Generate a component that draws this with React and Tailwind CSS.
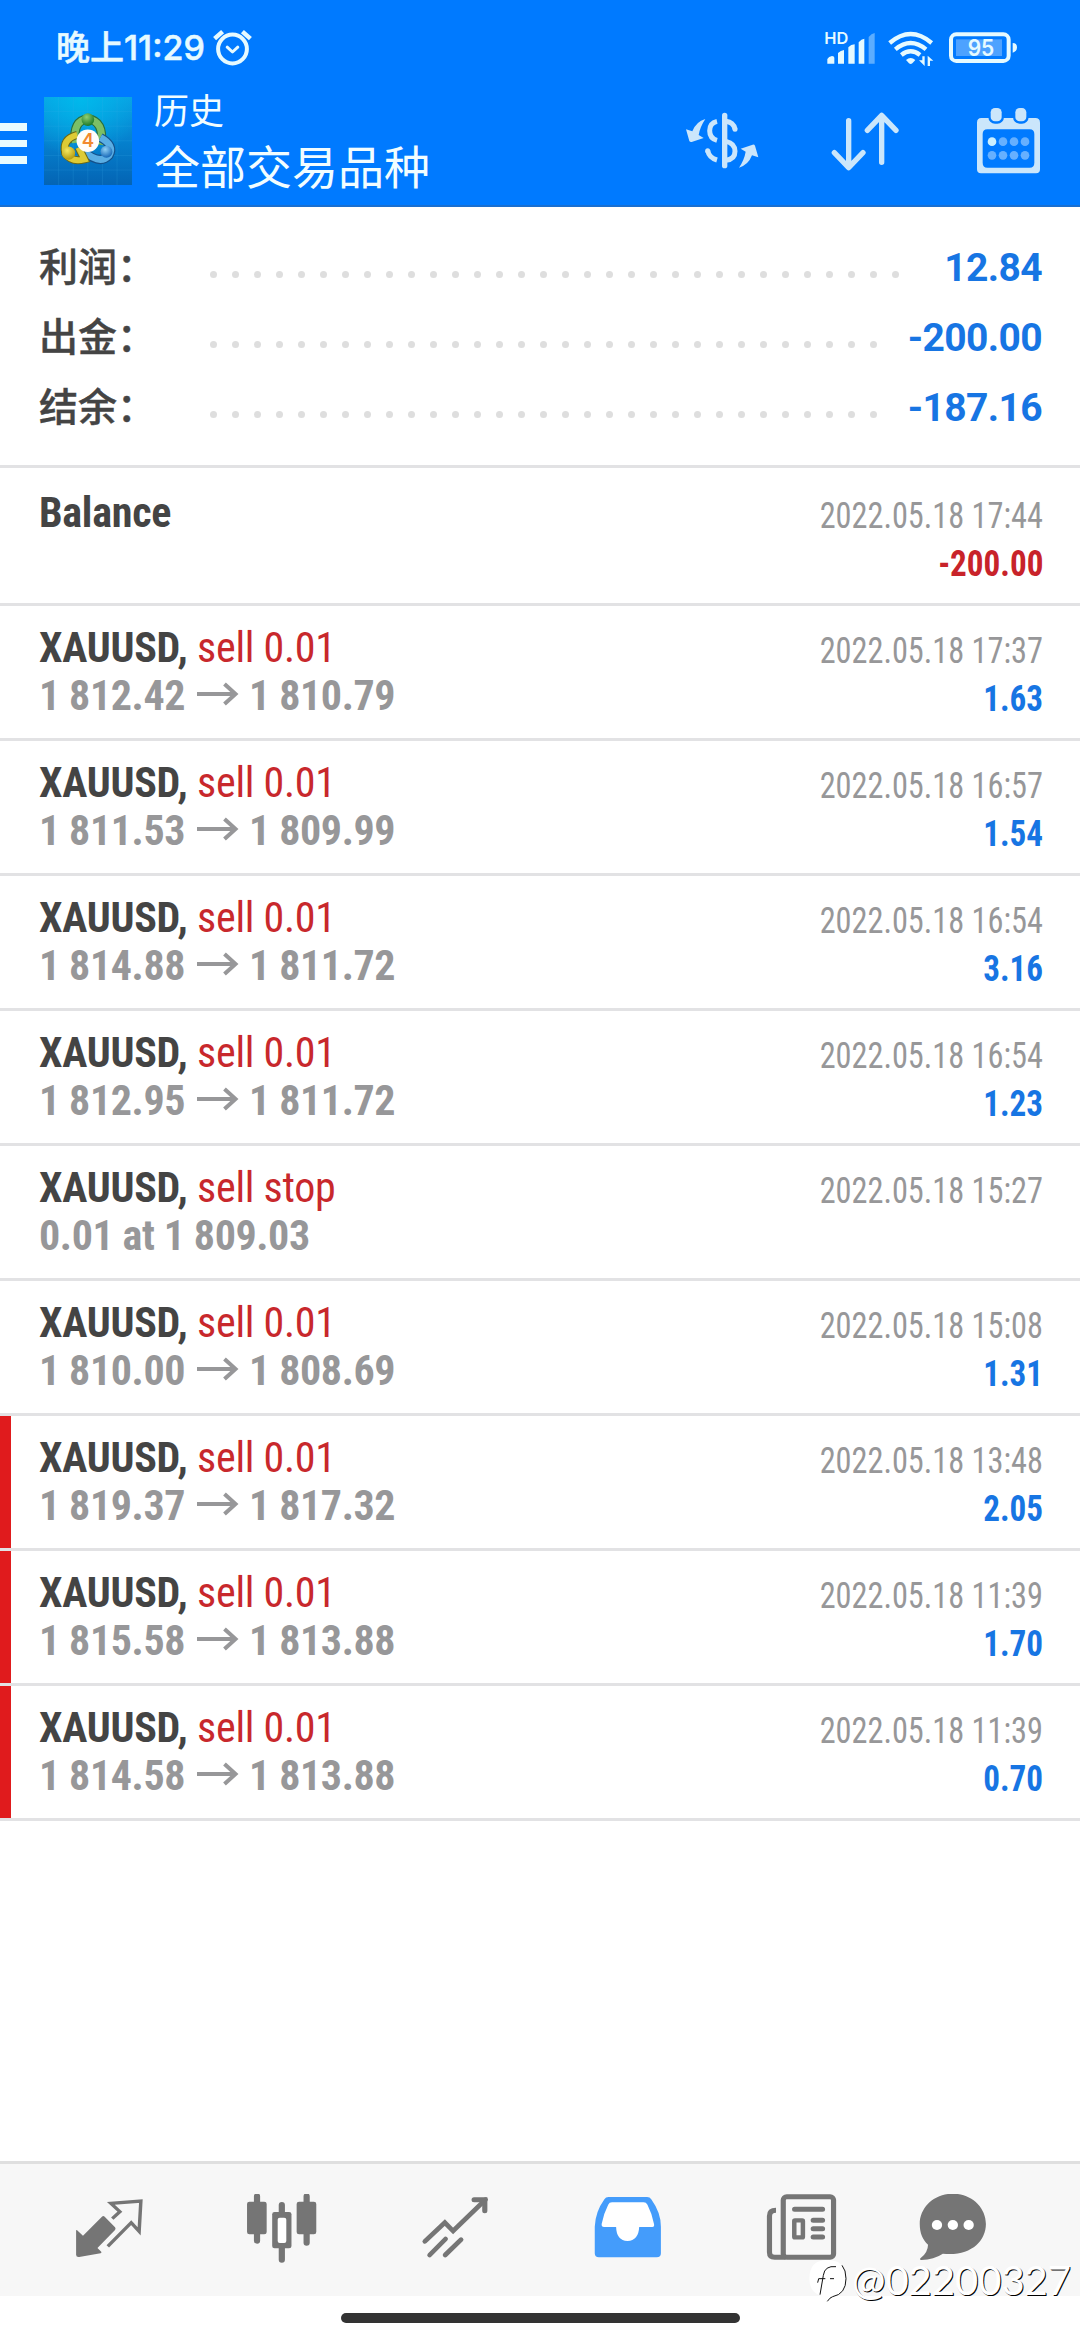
const summary = [
  { label: "利润：", value: "12.84", dots: 32 },
  { label: "出金：", value: "-200.00", dots: 31 },
  { label: "结余：", value: "-187.16", dots: 31 },
];

const deals = [
  { action: "sell 0.01", from: "1 812.42", to: "1 810.79", date: "2022.05.18 17:37", profit: "1.63" },
  { action: "sell 0.01", from: "1 811.53", to: "1 809.99", date: "2022.05.18 16:57", profit: "1.54" },
  { action: "sell 0.01", from: "1 814.88", to: "1 811.72", date: "2022.05.18 16:54", profit: "3.16" },
  { action: "sell 0.01", from: "1 812.95", to: "1 811.72", date: "2022.05.18 16:54", profit: "1.23" },
  { action: "sell stop", note: "0.01 at 1 809.03", date: "2022.05.18 15:27" },
  { action: "sell 0.01", from: "1 810.00", to: "1 808.69", date: "2022.05.18 15:08", profit: "1.31" },
  { action: "sell 0.01", from: "1 819.37", to: "1 817.32", date: "2022.05.18 13:48", profit: "2.05", marked: true },
  { action: "sell 0.01", from: "1 815.58", to: "1 813.88", date: "2022.05.18 11:39", profit: "1.70", marked: true },
  { action: "sell 0.01", from: "1 814.58", to: "1 813.88", date: "2022.05.18 11:39", profit: "0.70", marked: true },
];

function AlarmIcon() {
  return (
    <svg className="ml-[7px] h-[40px] w-[42px]" viewBox="212 27 42 40" fill="none" stroke="#e6faff" strokeLinecap="round" strokeLinejoin="round">
      <circle cx="232.5" cy="48" r="14.4" strokeWidth="4" />
      <path d="M214.6 37.6l8-7M250.4 37.6l-8-7" strokeWidth="4.5" strokeLinecap="butt" />
      <path d="M227.2 46.2l5.3 4.8 5.3-4.8" strokeWidth="3" />
    </svg>
  );
}

function SystemIcons() {
  return (
    <svg className="h-[38px] w-[194px]" viewBox="552 85 582 114" fill="#e6faff">
      <text x="553" y="129" fontSize="49" fontFamily="Inter, sans-serif" fontWeight="600" textLength="72" lengthAdjust="spacingAndGlyphs">HD</text>
      <path d="M562 189v-14q4-8 14-9q7 0 7 5v18zM594 189v-32q8-8 18-9v41zM625 189v-49q8-9 19-9v58zM656 189v-64q8-10 17-11v75z" />
      <path d="M686 189v-80q8-10 18-12v92z" opacity="0.4" />
      <g fill="none" stroke="#e6faff" strokeWidth="13">
        <path d="M749 127Q812 73 875 127" />
        <path d="M766 146Q812 108 858 146" />
        <path d="M784 163Q812 141 840 163" />
      </g>
      <path d="M798 178q14-12 28 0l-9 10q-5 4-10 0z" />
      <path d="M847 167h7v29l-17-17h10zM863 196v-31l17 15h-10v16z" />
      <rect x="933" y="101" width="173" height="80" rx="16" fill="none" stroke="#e6faff" strokeWidth="12" />
      <rect x="948" y="116" width="138" height="50" fill="#fff" opacity="0.3" />
      <path d="M1118 127q13 0 13 13t-13 16z" />
      <text x="983" y="167" fontSize="67" fontFamily="Inter, sans-serif" fontWeight="600" textLength="80" lengthAdjust="spacingAndGlyphs">95</text>
    </svg>
  );
}

function AppLogo() {
  return (
    <svg className="ml-[17px] h-[88px] w-[88px]" viewBox="132 38 265 265">
      <defs>
        <linearGradient id="tile" x1="0" y1="0" x2="0" y2="1">
          <stop offset="0" stopColor="#0aa0e2" />
          <stop offset="0.5" stopColor="#0581ce" />
          <stop offset="1" stopColor="#0464b4" />
        </linearGradient>
        <radialGradient id="glow" cx="0.42" cy="0" r="0.7">
          <stop offset="0" stopColor="#00b9ec" />
          <stop offset="1" stopColor="#00b9ec" stopOpacity="0" />
        </radialGradient>
        <radialGradient id="green" cx="0.4" cy="0.3" r="0.7">
          <stop offset="0" stopColor="#8fcf72" />
          <stop offset="1" stopColor="#1c7a2a" />
        </radialGradient>
        <radialGradient id="gold" cx="0.4" cy="0.3" r="0.7">
          <stop offset="0" stopColor="#f5e860" />
          <stop offset="1" stopColor="#b49b10" />
        </radialGradient>
        <radialGradient id="azure" cx="0.4" cy="0.3" r="0.7">
          <stop offset="0" stopColor="#8fd0f5" />
          <stop offset="1" stopColor="#1668b8" />
        </radialGradient>
      </defs>
      <rect x="132" y="38" width="265" height="265" fill="url(#tile)" />
      <rect x="132" y="38" width="265" height="265" fill="url(#glow)" />
      <path d="M176 38v265M220 38v265M264 38v265M308 38v265M352 38v265M132 82h265M132 126h265M132 170h265M132 214h265M132 258h265" stroke="#3cb0ea" strokeWidth="1.5" opacity="0.35" />
      <path d="M226 176Q218 108 264 104Q314 110 304 182" fill="none" stroke="#2a6e3c" strokeWidth="28" />
      <path d="M226 176Q218 108 264 104Q314 110 304 182" fill="none" stroke="#7cbf66" strokeWidth="21" />
      <path d="M302 160Q346 184 328 214Q300 244 250 200" fill="none" stroke="#14508a" strokeWidth="27" />
      <path d="M302 160Q346 184 328 214Q300 244 250 200" fill="none" stroke="#5aaee4" strokeWidth="20" />
      <path d="M232 152Q186 164 196 208Q214 236 254 226L236 190" fill="none" stroke="#6e6a14" strokeWidth="24" />
      <path d="M232 152Q186 164 196 208Q214 236 254 226L236 190" fill="none" stroke="#ddcb35" strokeWidth="18" />
      <circle cx="264" cy="106" r="19" fill="url(#green)" />
      <circle cx="206" cy="207" r="20" fill="url(#gold)" />
      <circle cx="320" cy="203" r="18" fill="url(#azure)" />
      <circle cx="264" cy="170" r="34" fill="#fffdfa" />
      <text x="264" y="190" textAnchor="middle" fontSize="56" fontFamily="Inter, sans-serif" fontWeight="600" fill="#f28a2e">4</text>
    </svg>
  );
}

function CurrencyIcon() {
  return (
    <svg className="h-[62px] w-[74px]" viewBox="135 330 222 186" fill="none" stroke="#cbe6fb" strokeWidth="15">
      <path d="M254 346v151" strokeWidth="16" strokeLinecap="round" />
      <path d="M231 364q-22 5-22 28t22 29" />
      <path d="M203 451q4 22 28 29" strokeLinecap="butt" />
      <path d="M203 452v1" strokeLinecap="round" />
      <path d="M258 364q22 3 27 23" />
      <path d="M285 387v1" strokeLinecap="round" />
      <path d="M258 424q27 6 27 30t-27 27" />
      <path d="M196 357q-28 8-39 37l-19-6 10 35q2 4 7 3l36-12-15-9q4-24 20-48z" fill="#cbe6fb" stroke="none" />
      <path d="M297 503q28-8 39-37l19 6-10-35q-2-4-7-3l-36 12 15 9q-4 24-20 48z" fill="#cbe6fb" stroke="none" />
    </svg>
  );
}

function SortIcon() {
  return (
    <svg className="ml-[71px] h-[62px] w-[70px]" viewBox="570 330 210 186" fill="none" stroke="#cbe6fb" strokeWidth="16" strokeLinecap="round" strokeLinejoin="round">
      <path d="M626 362v140M583 458l43 45 43-45" />
      <path d="M725 487V350M682 391l43-45 43 45" />
    </svg>
  );
}

function CalendarIcon() {
  return (
    <svg className="ml-[76px] h-[70px] w-[64px]" viewBox="1008 318 192 210">
      <path fillRule="evenodd" fill="#cbe6fb" d="M1024 354H1186Q1200 354 1200 368V508Q1200 520 1188 520H1023Q1011 520 1011 508V368Q1011 354 1024 354ZM1042 388Q1028 388 1028 402V488Q1028 503 1042 503H1169Q1183 503 1183 488V402Q1183 388 1169 388Z" />
      <rect x="1052" y="324" width="33" height="40" rx="13" fill="#cbe6fb" stroke="#007aff" strokeWidth="14" paintOrder="stroke" />
      <rect x="1126" y="324" width="33" height="40" rx="13" fill="#cbe6fb" stroke="#007aff" strokeWidth="14" paintOrder="stroke" />
      <g fill="#66b0ff">
        <circle cx="1056" cy="425" r="13" fill="#cbefff" />
        <circle cx="1089" cy="425" r="13" />
        <circle cx="1122" cy="425" r="13" />
        <circle cx="1155" cy="425" r="13" />
        <circle cx="1056" cy="466" r="13" />
        <circle cx="1089" cy="466" r="13" />
        <circle cx="1122" cy="466" r="13" />
        <circle cx="1155" cy="466" r="13" />
      </g>
    </svg>
  );
}

function Header() {
  return (
    <header className="h-[207px] border-b-2 border-[#1a6fd0] bg-[#007aff]">
      <div className="flex h-[75px] items-center justify-between pt-[20px] pr-[62px] pl-[56px]">
        <div className="flex items-center font-['Inter','Noto_Sans_CJK_SC',sans-serif] text-[34px] leading-[40px] font-medium text-[#e6faff]">
          <span className="[-webkit-text-stroke:0.5px_#e6faff]">晚上11:29</span>
          <AlarmIcon />
        </div>
        <SystemIcons />
      </div>
      <div className="flex h-[132px] items-center pr-[40px]">
        <div className="mt-[5px] flex flex-col gap-[9px]">
          <span className="h-[7.5px] w-[27px] bg-[#e8fbff]" />
          <span className="h-[7.5px] w-[27px] bg-[#e8fbff]" />
          <span className="h-[7.5px] w-[27px] bg-[#e8fbff]" />
        </div>
        <AppLogo />
        <div className="ml-[22px] flex-1 font-['Noto_Sans_CJK_SC',sans-serif] font-normal text-[#f2fdff]">
          <div className="mt-[-6px] text-[35px] leading-[52px]">历史</div>
          <div className="text-[46px] leading-[58px]">全部交易品种</div>
        </div>
        <CurrencyIcon />
        <SortIcon />
        <CalendarIcon />
      </div>
    </header>
  );
}

function SummaryRow({ label, value, dots }) {
  return (
    <div className="flex h-[70px] items-center">
      <div className="w-[171px] pb-[6px] font-['Noto_Sans_CJK_SC',sans-serif] text-[39px] leading-[58px] font-medium text-[#444] [-webkit-text-stroke:0.4px_#444]">{label}</div>
      <div className="mt-[14px] flex flex-1 gap-[15px]">
        {Array.from({ length: dots }, (_, i) => (
          <span key={i} className="size-[7px] shrink-0 rounded-full bg-[#dedede]" />
        ))}
      </div>
      <div className="pt-[2px] text-[39px] leading-[70px] font-bold tracking-[-0.6px] text-[#1775e3]">{value}</div>
    </div>
  );
}

function Arrow() {
  return (
    <svg className="mr-[10px] ml-[12px] inline-block h-[24px] w-[42px] align-[4px]" viewBox="0 0 42 24" fill="none" stroke="#979799" strokeWidth="4">
      <path d="M0 12h39M27.5 2l11 10-11 10" />
    </svg>
  );
}

function DateText({ children }) {
  return <div className="origin-right translate-y-px scale-x-[0.897] text-[36px] text-[#979799]">{children}</div>;
}

function Amount({ children, negative }) {
  return (
    <div className={`origin-right translate-y-px scale-x-[0.92] text-[36px] ${negative ? "text-[#c8232a]" : "text-[#1775e3]"}`}>
      {children}
    </div>
  );
}

function DealRow({ action, from, to, note, date, profit, marked }) {
  return (
    <div className="flex h-[135px] border-b-[3px] border-[#e2e2e4]">
      <div className={marked ? "w-[11px] bg-[#e01b1d]" : "w-[11px]"} />
      <div className="flex-1 pt-[18px] pr-[37px] pl-[28px] font-['Roboto_Condensed','Roboto',sans-serif] text-[42px] leading-[48px]">
        <div className="flex h-[48px] items-baseline justify-between">
          <div className="tracking-[-0.25px]">
            <span className="font-bold text-[#444]">XAUUSD, </span>
            <span className="text-[#c8282c]">{action}</span>
          </div>
          <DateText>{date}</DateText>
        </div>
        <div className="flex h-[48px] items-baseline justify-between font-bold">
          <div className="tracking-[-0.4px] text-[#979799]">
            {note || (
              <>
                {from}
                <Arrow />
                {to}
              </>
            )}
          </div>
          <Amount>{profit}</Amount>
        </div>
      </div>
    </div>
  );
}

function BalanceRow() {
  return (
    <div className="h-[138px] border-b-[3px] border-[#e2e2e4] pt-[21px] pr-[37px] pl-[39px] font-['Roboto_Condensed','Roboto',sans-serif] text-[42px] leading-[48px]">
      <div className="flex h-[48px] items-baseline justify-between">
        <div className="font-bold tracking-[-0.25px] text-[#444]">Balance</div>
        <DateText>2022.05.18 17:44</DateText>
      </div>
      <div className="flex h-[48px] justify-end pt-[2px] font-bold">
        <Amount negative>-200.00</Amount>
      </div>
    </div>
  );
}

function NavIcon({ viewBox, children }) {
  return (
    <svg className="h-[72px] w-[72px]" viewBox={viewBox} preserveAspectRatio="none" fill="#757575">
      {children}
    </svg>
  );
}

function BottomNav() {
  return (
    <nav className="flex h-[135px] items-center border-t-[3px] border-[#dfdfdf] bg-[#f7f7f7] pl-[22px]">
      <div className="flex w-[173px] justify-center">
        <NavIcon viewBox="210 132 209 216">
          <path d="M219 242q0-3 3-1l17 16 55-57q4-4 8 0l30 32q3 4 0 8l-51 54 11 11q2 4-2 5l-62 11q-9 1-9-7z" />
          <path d="M324 206l22-21-26-25 87-7-5 91-23-26-68 71" fill="none" stroke="#757575" strokeWidth="10" />
        </NavIcon>
      </div>
      <div className="flex w-[173px] justify-center">
        <NavIcon viewBox="712 132 209 216">
          <path d="M744 139v133M888 139v139M816 165v30M816 290v39" stroke="#757575" strokeWidth="18" strokeLinecap="round" />
          <rect x="715" y="155" width="57" height="98" rx="7" />
          <rect x="859" y="155" width="57" height="98" rx="7" />
          <rect x="788" y="186" width="56" height="109" rx="7" />
          <rect x="804" y="203" width="25" height="76" rx="6" fill="#fff" />
        </NavIcon>
      </div>
      <div className="flex w-[173px] justify-center">
        <NavIcon viewBox="1214 132 209 216">
          <g fill="none" stroke="#757575" strokeWidth="14" strokeLinecap="round">
            <path d="M1231 274l58-56 24 25 94-94" />
            <path d="M1374 149h31v33" strokeWidth="15" />
            <path d="M1245 315l46-48M1290 315l46-46" />
          </g>
        </NavIcon>
      </div>
      <div className="flex w-[173px] justify-center">
        <NavIcon viewBox="150 132 209 216">
          <path fill="#449cfb" d="M198 141H310Q318 141 322 148Q350 188 350 230V310Q350 322 338 322H170Q158 322 158 310V230Q160 185 186 148Q190 141 198 141Z" />
          <path fill="#fff" d="M208 157Q200 157 197 164Q184 190 178 222Q177 231 185 231H220Q221 272 253 273Q285 272 287 231H325Q332 231 330 222Q324 190 311 164Q307 157 300 157Z" />
        </NavIcon>
      </div>
      <div className="flex w-[173px] justify-center">
        <NavIcon viewBox="652 132 209 216">
          <g fill="none" stroke="#757575" strokeWidth="15">
            <rect x="705" y="140" width="146" height="182" rx="10" />
            <path d="M684 181q-19 0-19 17v109q0 15 15 15h32" />
            <path d="M738 178h81M792 211h27M792 236h27M792 261h27" strokeLinecap="round" />
            <rect x="737" y="211" width="25" height="51" rx="2" strokeWidth="13" />
          </g>
        </NavIcon>
      </div>
      <div className="flex w-[131px] justify-center">
        <NavIcon viewBox="1095 132 209 216">
          <path d="M1199 131C1252 131 1295 171 1295 222C1295 276 1248 320 1170 311Q1144 329 1108 330Q1101 329 1105 325Q1127 307 1127 284C1111 269 1103 249 1103 222C1103 171 1146 131 1199 131Z" />
          <g fill="#fff">
            <circle cx="1153" cy="225" r="15" />
            <circle cx="1199" cy="225" r="15" />
            <circle cx="1245" cy="225" r="15" />
          </g>
        </NavIcon>
      </div>
    </nav>
  );
}

function Watermark() {
  return (
    <div className="absolute right-[9px] bottom-[36px] flex items-center">
      <svg className="h-[44px] w-[44px]" viewBox="12 32 132 132" fill="none">
        <path d="M76 38q56 0 56 56 0 54-56 66 8-8 8-12-62 0-62-54 0-56 54-56z" fill="#fff" />
        <path d="M47 106l3-12h20M84 94h12M102 58q-34-4-38 26l-10 58M120 54q12 14 12 40 0 46-40 54-8 2-16 14" stroke="#111" strokeWidth="3" />
      </svg>
      <span className="ml-[2px] font-['Lato',sans-serif] text-[40px] leading-[48px] text-white [text-shadow:1px_1px_0_#000]">@02200327</span>
    </div>
  );
}

export default function App() {
  return (
    <div className="relative flex h-[2340px] w-[1080px] flex-col overflow-hidden bg-white font-['Roboto',sans-serif]">
      <Header />
      <section className="h-[261px] border-b-[3px] border-[#e2e2e4] pt-[25px] pr-[38px] pl-[39px]">
        {summary.map((row) => (
          <SummaryRow key={row.label} {...row} />
        ))}
      </section>
      <main className="flex-1">
        <BalanceRow />
        {deals.map((deal, i) => (
          <DealRow key={i} {...deal} />
        ))}
      </main>
      <BottomNav />
      <div className="flex h-[44px] items-center justify-center">
        <div className="h-[10px] w-[399px] rounded-full bg-[#333]" />
      </div>
      <Watermark />
    </div>
  );
}
